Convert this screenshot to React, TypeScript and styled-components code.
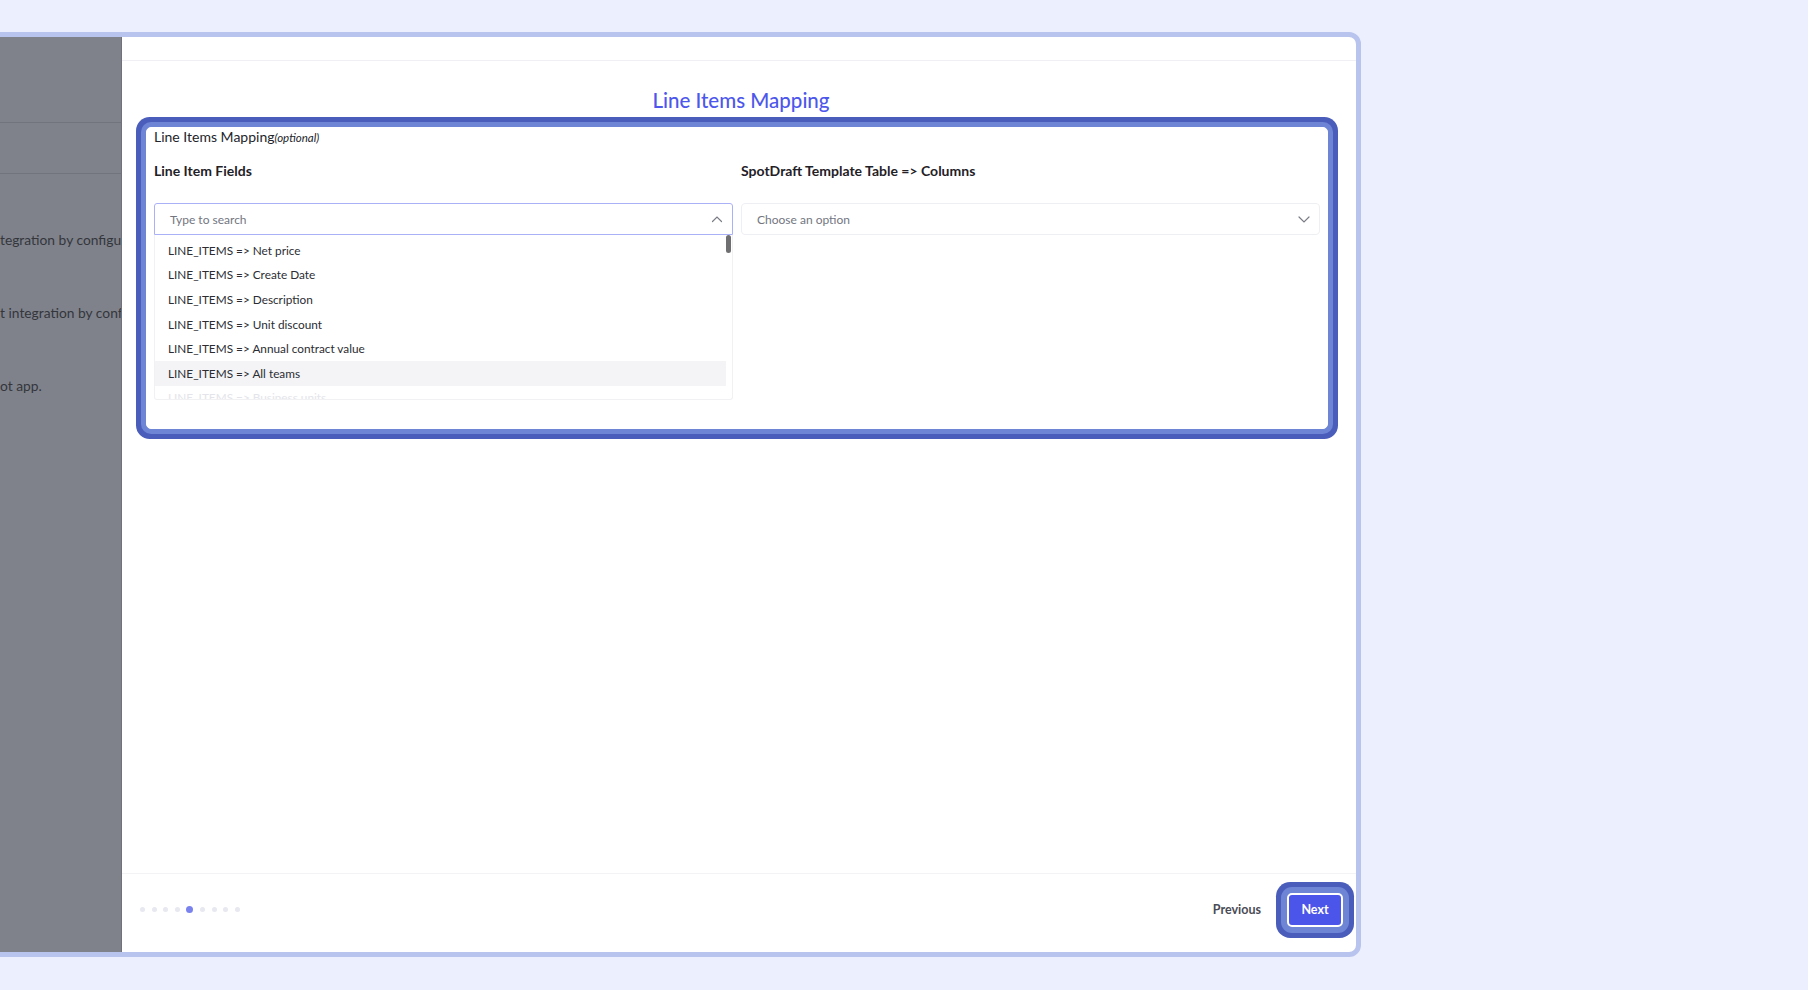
import styled, { createGlobalStyle } from 'styled-components';

const GlobalStyle = createGlobalStyle`
  html, body {
    margin: 0;
    padding: 0;
    background: #eceffd;
    font-family: Lato, 'Open Sans', sans-serif;
    overflow: hidden;
  }
`;

export const Page = styled.div`
  width: 1808px;
  height: 990px;
  padding-top: 32px;
  box-sizing: border-box;
  background: #eceffd;
`;

export const Frame = styled.div`
  margin-left: -20px;
  width: 1381px;
  height: 925px;
  box-sizing: border-box;
  border: 5px solid #b8c3ee;
  border-radius: 12px;
  background: #fff;
  display: flex;
  overflow: hidden;
`;

export const Sidebar = styled.div`
  width: 136px;
  flex-shrink: 0;
  background: #7f828b;
  border-right: 1px solid #6f727a;
  display: flex;
  flex-direction: column;
  overflow: hidden;
`;

export const SideBlock = styled.div<{ $h: number }>`
  height: ${({ $h }) => $h}px;
  flex-shrink: 0;
  border-bottom: 1px solid #71747c;
`;

export const SideList = styled.div`
  padding-top: 29px;
  display: flex;
  flex-direction: column;
`;

export const SideRow = styled.div`
  height: 73px;
  display: flex;
  align-items: center;
  padding-left: 15px;
  overflow: hidden;
`;

export const SideText = styled.span`
  white-space: nowrap;
  font-size: 13.8px;
  color: #34363c;
`;

export const Main = styled.div`
  flex: 1;
  display: flex;
  flex-direction: column;
  min-width: 0;
`;

export const TopBar = styled.div`
  height: 23px;
  flex-shrink: 0;
  border-bottom: 1px solid #f0f0f4;
`;

export const Body = styled.div`
  flex: 1;
  padding: 26px 28px 0 24px;
  display: flex;
  flex-direction: column;
  align-items: stretch;
`;

export const Title = styled.h2`
  margin: 0 0 14px;
  padding-left: 8px;
  text-align: center;
  font-size: 20.5px;
  line-height: 26px;
  font-weight: 500;
  color: #4d57ec;
`;

export const Card = styled.div`
  background: #fff;
  border-radius: 5px;
  border: 1px solid #fff;
  box-shadow: 0 0 0 5px #6e85d5, 0 0 0 10px #4a5dbb;
  padding: 0 7px 28px;
`;

export const CardHead = styled.div`
  font-size: 14px;
  line-height: 18px;
  color: #23252b;
  i {
    font-size: 11.5px;
  }
`;

export const Columns = styled.div`
  display: grid;
  grid-template-columns: 1fr 1fr;
  column-gap: 8px;
  margin-top: 15px;
`;

export const Column = styled.div`
  display: flex;
  flex-direction: column;
`;

export const FieldLabel = styled.div`
  font-size: 14px;
  line-height: 18px;
  font-weight: 700;
  color: #1f2127;
  margin-bottom: 23px;
`;

export const SelectBox = styled.div<{ $open?: boolean }>`
  height: 32px;
  box-sizing: border-box;
  border: 1px solid ${({ $open }) => ($open ? '#aab1f7' : '#eeeff3')};
  border-radius: ${({ $open }) => ($open ? '3px 3px 0 0' : '4px')};
  display: flex;
  align-items: center;
  justify-content: space-between;
  padding: 0 8px 0 15px;
  font-size: 12px;
  color: #73767f;
  svg {
    width: 14px;
    height: 14px;
  }
`;

export const Options = styled.div`
  position: relative;
  height: 165px;
  box-sizing: border-box;
  padding: 3px 6px 0 0;
  border: 1px solid #f1f1f4;
  border-top: none;
  border-radius: 0 0 3px 3px;
  overflow: hidden;
`;

export const Option = styled.div<{ $active?: boolean; $faded?: boolean }>`
  height: 24.6px;
  display: flex;
  align-items: center;
  padding-left: 13px;
  font-size: 11.8px;
  color: ${({ $faded }) => ($faded ? '#e4e5ea' : '#2b2d33')};
  background: ${({ $active }) => ($active ? '#f4f4f6' : 'transparent')};
`;

export const Thumb = styled.div`
  position: absolute;
  right: 1px;
  top: 0;
  width: 5px;
  height: 18px;
  border-radius: 3px;
  background: #6f6f72;
`;

export const Footer = styled.div`
  height: 79px;
  box-sizing: border-box;
  flex-shrink: 0;
  border-top: 1px solid #f3f3f6;
  display: flex;
  align-items: center;
  justify-content: space-between;
  padding: 0 13px 7px 18px;
`;

export const Dots = styled.div`
  display: flex;
  align-items: center;
  gap: 6.6px;
`;

export const Dot = styled.span<{ $active?: boolean }>`
  width: ${({ $active }) => ($active ? 7 : 5)}px;
  height: ${({ $active }) => ($active ? 7 : 5)}px;
  border-radius: 50%;
  background: ${({ $active }) => ($active ? '#7a82ee' : '#e7e8f0')};
`;

export const Actions = styled.div`
  display: flex;
  align-items: center;
  gap: 26px;
`;

export const PrevBtn = styled.button`
  border: none;
  background: none;
  padding: 0;
  font-family: inherit;
  font-size: 12.5px;
  font-weight: 700;
  color: #4a4c55;
`;

export const NextBtn = styled.button`
  width: 56px;
  height: 34px;
  border: 2px solid #fff;
  border-radius: 5px;
  background: #4c55e9;
  color: #fff;
  font-family: inherit;
  font-size: 12.5px;
  font-weight: 700;
  box-shadow: 0 0 0 6px #6e85d5, 0 0 0 11px #4a5dbb;
`;

const Chevron = ({ up }: { up?: boolean }) => (
  <svg viewBox="0 0 14 14" fill="none" stroke="#7b7d86" strokeWidth="1.2" strokeLinecap="round">
    {up ? <path d="M2.5 9.5 L7 5 L11.5 9.5" /> : <path d="M2 5 L7 10 L12 5" />}
  </svg>
);

const items = ['Net price', 'Create Date', 'Description', 'Unit discount', 'Annual contract value', 'All teams'];

function App() {
  return (
    <>
      <GlobalStyle />
      <Page>
        <Frame>
          <Sidebar>
            <SideBlock $h={85} />
            <SideBlock $h={50} />
            <SideList>
              <SideRow>
                <SideText>tegration by configu</SideText>
              </SideRow>
              <SideRow>
                <SideText>t integration by conf</SideText>
              </SideRow>
              <SideRow>
                <SideText>ot app.</SideText>
              </SideRow>
            </SideList>
          </Sidebar>
          <Main>
            <TopBar />
            <Body>
              <Title>Line Items Mapping</Title>
              <Card>
                <CardHead>
                  Line Items Mapping<i>(optional)</i>
                </CardHead>
                <Columns>
                  <Column>
                    <FieldLabel>Line Item Fields</FieldLabel>
                    <SelectBox $open>
                      <span>Type to search</span>
                      <Chevron up />
                    </SelectBox>
                    <Options>
                      <Thumb />
                      {items.map((it) => (
                        <Option key={it} $active={it === 'All teams'}>
                          LINE_ITEMS =&gt; {it}
                        </Option>
                      ))}
                      <Option $faded>LINE_ITEMS =&gt; Business units</Option>
                    </Options>
                  </Column>
                  <Column>
                    <FieldLabel>SpotDraft Template Table =&gt; Columns</FieldLabel>
                    <SelectBox>
                      <span>Choose an option</span>
                      <Chevron />
                    </SelectBox>
                  </Column>
                </Columns>
              </Card>
            </Body>
            <Footer>
              <Dots>
                {[0, 1, 2, 3, 4, 5, 6, 7, 8].map((i) => (
                  <Dot key={i} $active={i === 4} />
                ))}
              </Dots>
              <Actions>
                <PrevBtn>Previous</PrevBtn>
                <NextBtn>Next</NextBtn>
              </Actions>
            </Footer>
          </Main>
        </Frame>
      </Page>
    </>
  );
}

export default App;
